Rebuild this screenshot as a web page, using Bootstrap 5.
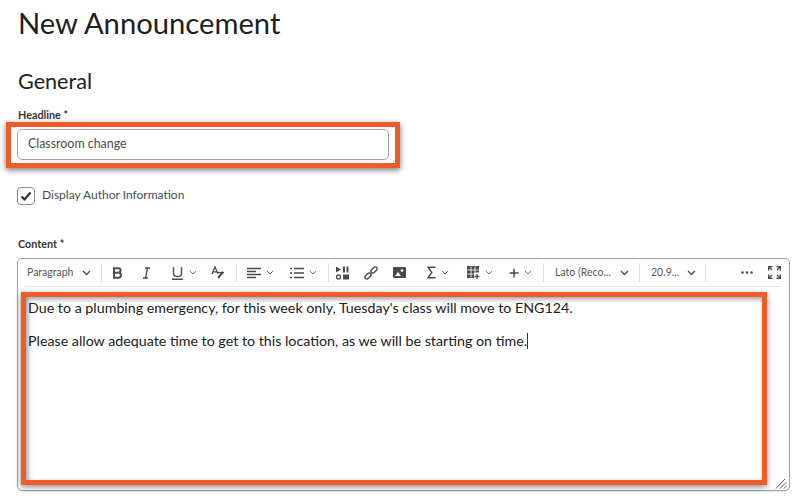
<!DOCTYPE html>
<html lang="en">
<head>
  <meta charset="UTF-8">
  <title>New Announcement</title>
  <link href="https://cdn.jsdelivr.net/npm/bootstrap@5.3.0/dist/css/bootstrap.min.css" rel="stylesheet">
  <style>
    html, body { height: 503px; overflow: hidden; }
    body { background: #fff; color: #202122; font-family: Lato, "Liberation Sans", sans-serif; }
    .page-wrap { padding: 0 10px 0 17px; }
    .page-title { font-size: 29.2px; font-weight: 400; line-height: 36px; margin: 5px 0 0 1px; color: #202122; }
    .section-title { font-size: 21.6px; font-weight: 400; line-height: 28px; margin: 26px 0 0 1px; color: #202122; }
    .field-label { display: block; font-size: 10.8px; font-weight: 700; line-height: 14px; margin: 0 0 0 1px; color: #333; }
    .headline-field { position: relative; width: 372px; margin-top: 13px; }
    .headline-input.form-control { height: 31px; margin-top: 7px; padding: 0 10px 2px; font-size: 12.4px; color: #494c4e; border: 1px solid #a0a3a6; border-radius: 5px; }
    .callout { position: absolute; border: 5px solid #f15a29; box-shadow: 0 2px 6px rgba(0,0,0,.55); pointer-events: none; }
    .callout-head { left: -11px; right: -11px; top: 14px; height: 46px; }
    .callout-body { left: 3px; right: 22px; top: 33px; height: 193px; box-shadow: 0 2px 6px rgba(0,0,0,.45), inset 2px 2px 5px rgba(0,0,0,.4); }
    .author-check { height: 18px; margin-top: 27px; gap: 7px; font-size: 12px; color: #494c4e; line-height: 18px; }
    .author-check span { padding-bottom: 2px; }
    .author-check .form-check-input { width: 18px; height: 18px; margin: 0; border: 1px solid #8d9094; border-radius: 4px; background-color: #fff; }
    .author-check .form-check-input:checked[type=checkbox] { background-color: #fff; border-color: #8d9094; --bs-form-check-bg-image: url("data:image/svg+xml,%3csvg xmlns='http://www.w3.org/2000/svg' viewBox='0 0 18 18'%3e%3cpath fill='none' stroke='%23333' stroke-width='2.2' d='M4.5 9.5l3 3 6-7'/%3e%3c/svg%3e"); background-size: 18px; }
    .content-label { margin-top: 32px; }
    .editor-box { position: relative; height: 233px; margin-top: 7px; border: 1px solid #a0a3a6; border-radius: 5px; box-shadow: 0 1px 2px rgba(0,0,0,.1); }
    .tool-strip { height: 28px; margin: 0 8px; border-bottom: 1px solid #e3e5e7; color: #494c4e; }
    .tool-strip svg { display: block; flex: none; }
    .tool-sep { width: 1px; height: 19px; background: #dfe1e3; flex: none; }
    .tool-cell { flex: none; height: 28px; width: 29px; }
    .tool-cell-tight { width: 27px; }
    .tool-cell-end { width: 16px; }
    .tool-split { flex: none; height: 28px; width: 41px; gap: 5px; }
    .tool-pick { flex: none; height: 28px; font-size: 10.5px; white-space: nowrap; color: #565a5c; }
    .pick-para { width: 75px; padding: 0 10px 0 1px; }
    .pick-font { width: 95px; padding: 0 10px 0 11px; }
    .pick-size { width: 65px; padding: 0 9px 0 11px; }
    .nudge-1 { margin-left: 1px; }
    .nudge-2 { margin-left: 2px; }
    .nudge-3 { margin-left: 3px; }
    .nudge-back { margin-right: -1px; }
    .editor-body { padding: 11px 11px 0 10px; font-size: 14.25px; line-height: 19px; color: #202122; }
    .editor-body p { margin: 0 0 14px; }
    .caret-mark { display: inline-block; width: 1px; height: 16px; background: #333; vertical-align: -3px; }
    .resize-grip { position: absolute; right: 2px; bottom: 1px; }
  </style>
</head>
<body>
  <div class="page-wrap position-relative">
    <h1 class="page-title">New Announcement</h1>
    <h2 class="section-title">General</h2>

    <div class="headline-field">
      <label class="field-label" for="headline">Headline *</label>
      <input id="headline" class="form-control headline-input" type="text" value="Classroom change">
      <div class="callout callout-head"></div>
    </div>

    <label class="author-check d-flex align-items-center">
      <input class="form-check-input" type="checkbox" checked>
      <span>Display Author Information</span>
    </label>

    <label class="field-label content-label">Content *</label>
    <div class="editor-box">
      <div class="tool-strip d-flex align-items-center">
        <div class="tool-pick pick-para d-flex align-items-center justify-content-between">
          <span>Paragraph</span>
          <svg width="9" height="6" viewBox="0 0 9 6"><path d="M1 1l3.500 3.500L8 1" fill="none" stroke="#494c4e" stroke-width="1.300"/></svg>
        </div>
        <div class="tool-sep"></div>

        <div class="tool-cell d-flex align-items-center justify-content-center nudge-1">
          <svg width="11" height="12" viewBox="0 0 11 12"><path d="M2 1.200h4.300c3 0 3 3.900 0 4.300 3.500.2 3.500 5.300 0 5.300H2zM2 5.700h4" fill="none" stroke="#494c4e" stroke-width="2"/></svg>
        </div>
        <div class="tool-cell d-flex align-items-center justify-content-center">
          <svg width="9" height="12" viewBox="0 0 9 12"><path d="M3 1h5M1 11h5M5.500 1l-2 10" fill="none" stroke="#494c4e" stroke-width="1.300"/></svg>
        </div>
        <div class="tool-split d-flex align-items-center justify-content-center nudge-2 nudge-back">
          <svg width="13" height="14" viewBox="0 0 13 14"><path d="M2.500 1v6.500c0 4 8 4 8 0V1M1 13.200h11" fill="none" stroke="#494c4e" stroke-width="1.400"/></svg>
          <svg width="8" height="5" viewBox="0 0 8 5"><path d="M.8.800L4 4 7.200.800" fill="none" stroke="#6e7376" stroke-width="1"/></svg>
        </div>
        <div class="tool-cell d-flex align-items-center justify-content-center">
          <svg width="14" height="13" viewBox="0 0 14 13"><path d="M1 8l3-7 3 7M2.200 5.800h3.600" fill="none" stroke="#494c4e" stroke-width="1.300"/><path d="M7 12l5-6" fill="none" stroke="#494c4e" stroke-width="2"/><path d="M7 6.500h6" stroke="#494c4e" stroke-width="1.300"/></svg>
        </div>
        <div class="tool-sep ms-1"></div>

        <div class="tool-split d-flex align-items-center justify-content-center nudge-3">
          <svg width="14" height="12" viewBox="0 0 14 12"><path d="M0 1.500h14M0 4.500h9M0 7.500h14M0 10.500h9" stroke="#494c4e" stroke-width="1.400"/></svg>
          <svg width="8" height="5" viewBox="0 0 8 5"><path d="M.8.800L4 4 7.200.800" fill="none" stroke="#6e7376" stroke-width="1"/></svg>
        </div>
        <div class="tool-split d-flex align-items-center justify-content-center nudge-2">
          <svg width="14" height="12" viewBox="0 0 14 12"><path d="M0 1.500h2M4 1.500h10M0 6h2M4 6h10M0 10.500h2M4 10.500h10" stroke="#494c4e" stroke-width="1.400"/></svg>
          <svg width="8" height="5" viewBox="0 0 8 5"><path d="M.8.800L4 4 7.200.800" fill="none" stroke="#6e7376" stroke-width="1"/></svg>
        </div>
        <div class="tool-sep ms-1 nudge-1"></div>

        <div class="tool-cell tool-cell-tight d-flex align-items-center justify-content-center">
          <svg width="13" height="14" viewBox="0 0 13 14"><path d="M0 .500l5 3-5 3z" fill="#494c4e"/><path d="M8 .500v6M11.500 .500v6" stroke="#494c4e" stroke-width="2"/><circle cx="2.500" cy="11" r="2" fill="none" stroke="#494c4e" stroke-width="1.400"/><rect x="7" y="8.500" width="6" height="5" fill="#494c4e"/></svg>
        </div>
        <div class="tool-cell d-flex align-items-center justify-content-center">
          <svg width="14" height="14" viewBox="0 0 14 14"><rect x="-3.600" y="-1.900" width="7.200" height="3.800" rx="1.900" transform="translate(4 10) rotate(-45)" fill="none" stroke="#494c4e" stroke-width="1.400"/><rect x="-3.600" y="-1.900" width="7.200" height="3.800" rx="1.900" transform="translate(10 4) rotate(-45)" fill="none" stroke="#494c4e" stroke-width="1.400"/></svg>
        </div>
        <div class="tool-cell d-flex align-items-center justify-content-center">
          <svg width="13" height="11" viewBox="0 0 13 11"><rect width="13" height="11" rx="1" fill="#494c4e"/><circle cx="9" cy="3.500" r="1.300" fill="#fff"/><path d="M2 9l3-4 3 4z" fill="#fff"/></svg>
        </div>
        <div class="tool-split d-flex align-items-center justify-content-center nudge-3">
          <svg width="9" height="13" viewBox="0 0 9 13"><path d="M8.500 1.200H1l3.800 5.300L1 11.800h7.500" fill="none" stroke="#494c4e" stroke-width="1.400"/></svg>
          <svg width="8" height="5" viewBox="0 0 8 5"><path d="M.8.800L4 4 7.200.800" fill="none" stroke="#6e7376" stroke-width="1"/></svg>
        </div>
        <div class="tool-split d-flex align-items-center justify-content-center nudge-1">
          <svg width="13" height="13" viewBox="0 0 13 13"><path d="M0 0h12v6.500H7V12H0z" fill="#494c4e"/><path d="M.5 4h11M.5 8h6M4 .5v11M8 .5v6" stroke="#fff" stroke-width=".8"/><path d="M10 8v5M7.500 10.500h5" stroke="#494c4e" stroke-width="1.300"/></svg>
          <svg width="8" height="5" viewBox="0 0 8 5"><path d="M.8.800L4 4 7.200.800" fill="none" stroke="#6e7376" stroke-width="1"/></svg>
        </div>
        <div class="tool-split d-flex align-items-center justify-content-center">
          <svg width="10" height="10" viewBox="0 0 10 10"><path d="M5 .500v9M.5 5h9" stroke="#494c4e" stroke-width="1.500"/></svg>
          <svg width="8" height="5" viewBox="0 0 8 5"><path d="M.8.800L4 4 7.200.800" fill="none" stroke="#6e7376" stroke-width="1"/></svg>
        </div>
        <div class="tool-sep nudge-2"></div>

        <div class="tool-pick pick-font d-flex align-items-center justify-content-between">
          <span>Lato (Reco...</span>
          <svg width="9" height="6" viewBox="0 0 9 6"><path d="M1 1l3.500 3.500L8 1" fill="none" stroke="#494c4e" stroke-width="1.300"/></svg>
        </div>
        <div class="tool-sep"></div>
        <div class="tool-pick pick-size d-flex align-items-center justify-content-between">
          <span>20.9...</span>
          <svg width="9" height="6" viewBox="0 0 9 6"><path d="M1 1l3.500 3.500L8 1" fill="none" stroke="#494c4e" stroke-width="1.300"/></svg>
        </div>
        <div class="tool-sep"></div>

        <div class="tool-cell d-flex align-items-center justify-content-center ms-auto me-1">
          <svg width="12" height="3" viewBox="0 0 12 3"><circle cx="1.500" cy="1.500" r="1.300" fill="#494c4e"/><circle cx="6" cy="1.500" r="1.300" fill="#494c4e"/><circle cx="10.500" cy="1.500" r="1.300" fill="#494c4e"/></svg>
        </div>
        <div class="tool-cell tool-cell-end d-flex align-items-center justify-content-end">
          <svg width="13" height="13" viewBox="0 0 13 13"><path d="M.7 4.500V.7h3.800M8.500.7h3.800v3.800M.7 8.500v3.800h3.800M12.300 8.500v3.800H8.500" fill="none" stroke="#494c4e" stroke-width="1.400"/><path d="M1 1l3 3M12 1L9 4M1 12l3-3M12 12L9 9" stroke="#494c4e" stroke-width="1.400"/></svg>
        </div>
      </div>

      <div class="editor-body">
        <p>Due to a plumbing emergency, for this week only, Tuesday's class will move to ENG124.</p>
        <p>Please allow adequate time to get to this location, as we will be starting on time.<span class="caret-mark"></span></p>
      </div>

      <svg class="resize-grip" width="12" height="11" viewBox="0 0 12 11"><path d="M1 10.500L10 1M5 10.500l6-6M9 10.500l2.500-2.500" stroke="#555" stroke-width="1"/></svg>
      <div class="callout callout-body"></div>
    </div>
  </div>
</body>
</html>
